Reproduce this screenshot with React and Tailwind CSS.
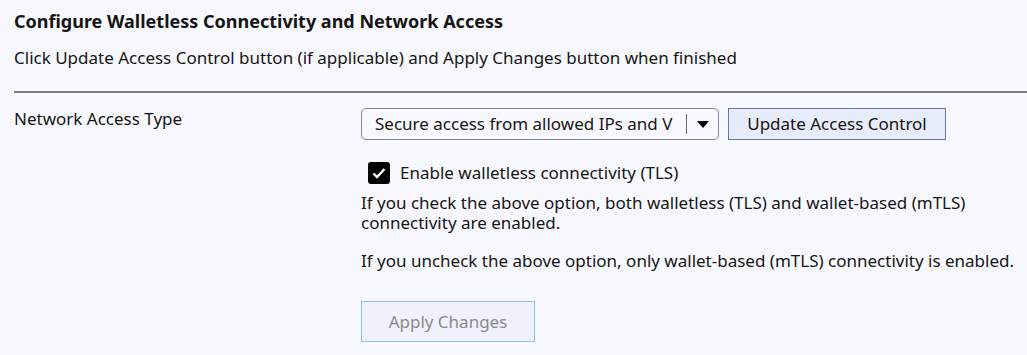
import React, { useState } from 'react'

const App = () => {
  const [tls, setTls] = useState(true)

  return (
    <div className="w-[1027px] h-[355px] bg-[#f7f8fd] text-[#161513] font-['Noto_Sans',sans-serif] overflow-hidden">
      {/* Header */}
      <div className="pl-[14px] pt-[9px]">
        <h2 className="text-[18px] font-bold leading-[24px]">Configure Walletless Connectivity and Network Access</h2>
        <p className="text-[17px] leading-[22px] mt-[14px]">
          Click Update Access Control button (if applicable) and Apply Changes button when finished
        </p>
      </div>
      <div className="ml-[14px] mt-[22px] border-t-2 border-[#7b7b7b]"></div>

      {/* Form row */}
      <div className="flex pl-[14px] pt-[15px]">
        <div className="w-[347px] text-[17px] leading-[22px]">Network Access Type</div>

        <div className="flex flex-col">
          <div className="flex items-center gap-[9px]">
            <div className="flex items-center w-[358px] h-[32px] rounded-[5px] border border-[#7c84a6] bg-[#f7f8fd]">
              <span className="flex-1 pl-[13px] text-[17px] whitespace-nowrap overflow-hidden">Secure access from allowed IPs and V</span>
              <span className="h-[20px] border-l border-[#5f6680]"></span>
              <span className="w-[31px] flex justify-center">
                <svg width="12" height="7" viewBox="0 0 12 7"><path d="M0 0h12L6 7z" fill="#000" /></svg>
              </span>
            </div>
            <button className="w-[218px] h-[32px] border border-[#6c78a3] bg-[#e6ecfa] text-[17px] text-[#161513]">
              Update Access Control
            </button>
          </div>

          <label className="flex items-center gap-[10px] mt-[22px] ml-[7px] text-[17px] leading-[22px]">
            <span
              onClick={() => setTls(!tls)}
              className={`w-[22px] h-[22px] rounded-[3px] flex items-center justify-center ${tls ? 'bg-black' : 'border border-black'}`}
            >
              {tls && (
                <svg width="14" height="12" viewBox="0 0 14 12"><path d="M1.5 6.5l3.5 3.5 7.5-8" fill="none" stroke="#fff" strokeWidth="2.4" /></svg>
              )}
            </span>
            Enable walletless connectivity (TLS)
          </label>

          <p className="w-[640px] mt-[9px] text-[17px] leading-[20px]">
            If you check the above option, both walletless (TLS) and wallet-based (mTLS) connectivity are enabled.
          </p>
          <p className="mt-[18px] text-[17px] leading-[20px] whitespace-nowrap">
            If you uncheck the above option, only wallet-based (mTLS) connectivity is enabled.
          </p>

          <button className="mt-[30px] w-[174px] h-[41px] border border-[#8ec0f2] bg-[#eff1fd] text-[17px] text-[#8a8a8a]">
            Apply Changes
          </button>
        </div>
      </div>
    </div>
  )
}

export default App
